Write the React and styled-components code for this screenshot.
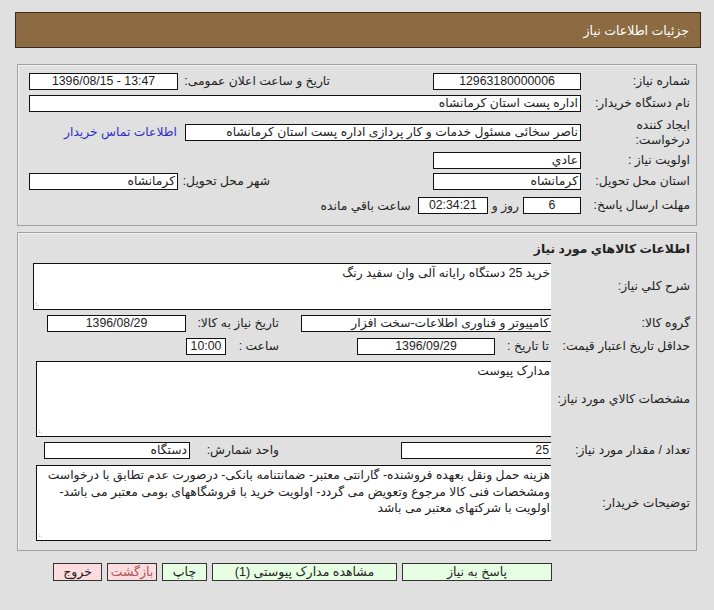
import React from "react";
import styled, { createGlobalStyle } from "styled-components";

const FS = "12.3px";

const GlobalStyle = createGlobalStyle`
  html, body { margin: 0; padding: 0; background: #e0e0e0; }
  body {
    font-family: "Liberation Sans", "DejaVu Sans", sans-serif;
    font-size: ${FS};
    color: #222;
  }
  * { box-sizing: border-box; }
`;

const Page = styled.div`
  width: 714px;
  height: 610px;
  direction: rtl;
  padding-top: 12px;
  background: #e0e0e0;
  overflow: hidden;
`;

const Header = styled.div`
  margin: 0 13px 0 15px;
  height: 36px;
  border: 1px solid #3a2a16;
  background: #8c6b43;
  color: #fff;
  display: flex;
  align-items: center;
  padding-right: 11px;
  font-size: 12.5px;
`;

const Panel = styled.div`
  margin: ${(p) => p.$mt}px 17px 0 17px;
  width: 680px;
  border: 1px solid #a0a0a0;
  box-shadow: inset 1px 1px 0 #f2f2f2;
  padding-bottom: ${(p) => p.$pb}px;
`;

const Row = styled.div`
  display: flex;
  align-items: center;
  height: ${(p) => p.$h}px;
  margin-top: ${(p) => p.$mt}px;
`;

const Cell = styled.div`
  width: ${(p) => p.$w}px;
  flex-shrink: 0;
  padding-right: ${(p) => p.$pr ?? 6}px;
  white-space: nowrap;
  line-height: 15px;
`;

const Title = styled.div`
  padding-right: 6px;
  font-weight: bold;
  white-space: nowrap;
`;

const Field = styled.div`
  width: ${(p) => p.$w}px;
  flex-shrink: 0;
  height: 17px;
  border: 1px solid #111;
  ${(p) => (p.$clip ? "border-right: none;" : "")}
  background: #fff;
  text-align: ${(p) => p.$align || "right"};
  padding: 0 2px;
  line-height: 15px;
  white-space: nowrap;
  overflow: hidden;
`;

const Inline = styled.span`
  margin: 0 ${(p) => p.$m ?? 4}px;
  white-space: nowrap;
`;

const Link = styled.a`
  color: #2f2fc4;
  text-decoration: none;
  white-space: nowrap;
`;

const Area = styled.div`
  position: relative;
  width: ${(p) => p.$w}px;
  height: ${(p) => p.$h}px;
  flex-shrink: 0;
  border: 1px solid #111;
  border-right: none;
  background: #fff;
  padding: ${(p) => p.$pt ?? 2}px 1px 0 0;
  line-height: ${(p) => p.$lh ?? 15}px;
  text-align: right;
  overflow: hidden;
`;

const Line = styled.div`
  white-space: nowrap;
`;

const Grip = styled.svg`
  position: absolute;
  left: 2px;
  bottom: 2px;
`;

const ButtonBar = styled.div`
  display: flex;
  gap: 5px;
  margin-top: 12px;
  padding-right: 162px;
`;

const Button = styled.button`
  width: ${(p) => p.$w}px;
  height: 18px;
  padding: 0;
  border: 1px solid #333;
  background: ${(p) => (p.$tone === "red" ? "#fcdcdf" : "#e6ffe2")};
  color: ${(p) => p.$color || "#222"};
  font-family: "Liberation Sans", "DejaVu Sans", sans-serif;
  font-size: 12.5px;
  line-height: 16px;
  direction: rtl;
`;

const GripIcon = () => (
  <Grip width="6" height="6" viewBox="0 0 6 6">
    <rect x="0" y="4" width="1" height="1" fill="#bbb" />
    <rect x="2" y="4" width="1" height="1" fill="#bbb" />
    <rect x="0" y="2" width="1" height="1" fill="#bbb" />
  </Grip>
);

export default function App() {
  return (
    <>
      <GlobalStyle />
      <Page>
        <Header>جزئیات اطلاعات نیاز</Header>

        <Panel $mt={16} $pb={11}>
          <Row $h={17} $mt={8}>
            <Cell $w={115}>شماره نیاز:</Cell>
            <Field $w={148} $align="center">12963180000006</Field>
            <Cell $w={255} $pr={103}>تاریخ و ساعت اعلان عمومی:</Cell>
            <Field $w={149} $align="center" dir="ltr">1396/08/15 - 13:47</Field>
          </Row>
          <Row $h={17} $mt={5}>
            <Cell $w={115}>نام دستگاه خریدار:</Cell>
            <Field $w={552}>اداره پست استان کرمانشاه</Field>
          </Row>
          <Row $h={35} $mt={3}>
            <Cell $w={115}>
              ایجاد کننده
              <br />
              درخواست:
            </Cell>
            <Field $w={396}>ناصر سخائی مسئول خدمات و کار پردازی اداره پست استان کرمانشاه</Field>
            <Cell $w={156} $pr={8}>
              <Link href="#">اطلاعات تماس خریدار</Link>
            </Cell>
          </Row>
          <Row $h={17} $mt={2}>
            <Cell $w={115}>اولویت نیاز :</Cell>
            <Field $w={148}>عادي</Field>
          </Row>
          <Row $h={17} $mt={4}>
            <Cell $w={115}>استان محل تحویل:</Cell>
            <Field $w={148}>کرمانشاه</Field>
            <Cell $w={255} $pr={163}>شهر محل تحویل:</Cell>
            <Field $w={149}>کرمانشاه</Field>
          </Row>
          <Row $h={17} $mt={7}>
            <Cell $w={115}>مهلت ارسال پاسخ:</Cell>
            <Field $w={58} $align="center">6</Field>
            <Inline $m={4}>روز و</Inline>
            <Field $w={70} $align="center">02:34:21</Field>
            <Inline $m={7}>ساعت باقي مانده</Inline>
          </Row>
        </Panel>

        <Panel $mt={6} $pb={9}>
          <Row $h={16} $mt={8}>
            <Title>اطلاعات کالاهاي مورد نياز</Title>
          </Row>
          <Row $h={47} $mt={6}>
            <Cell $w={145}>شرح کلي نياز:</Cell>
            <Area $w={518} $h={47}>
              خرید 25 دستگاه رایانه آلی وان سفید رنگ
              <GripIcon />
            </Area>
          </Row>
          <Row $h={17} $mt={5}>
            <Cell $w={145}>گروه کالا:</Cell>
            <Field $w={250} $clip>کامپیوتر و فناوری اطلاعات-سخت افزار</Field>
            <Cell $w={115} $pr={22}>تاریخ نیاز به کالا:</Cell>
            <Field $w={139} $align="center">1396/08/29</Field>
          </Row>
          <Row $h={17} $mt={6}>
            <Cell $w={141}>حداقل تاریخ اعتبار قیمت:</Cell>
            <Cell $w={60} $pr={6}>تا تاریخ :</Cell>
            <Field $w={138} $align="center">1396/09/29</Field>
            <Cell $w={131} $pr={78}>ساعت :</Cell>
            <Field $w={40} $align="center">10:00</Field>
          </Row>
          <Row $h={76} $mt={6}>
            <Cell $w={145}>مشخصات کالاي مورد نياز:</Cell>
            <Area $w={515} $h={76}>
              مدارک پیوست
              <GripIcon />
            </Area>
          </Row>
          <Row $h={17} $mt={5}>
            <Cell $w={145}>تعداد / مقدار مورد نیاز:</Cell>
            <Field $w={150} $clip>25</Field>
            <Cell $w={211} $pr={122}>واحد شمارش:</Cell>
            <Field $w={146}>دستگاه</Field>
          </Row>
          <Row $h={76} $mt={6}>
            <Cell $w={145}>توضیحات خریدار:</Cell>
            <Area $w={515} $h={76} $pt={1} $lh={16.5}>
              <Line>هزینه حمل ونقل بعهده فروشنده- گارانتی معتبر- ضمانتنامه بانکی- درصورت عدم تطابق با درخواست</Line>
              <Line>ومشخصات فنی کالا مرجوع وتعویض می گردد- اولویت خرید با فروشگاههای بومی معتبر می باشد-</Line>
              <Line>اولویت با شرکتهای معتبر می باشد</Line>
              <GripIcon />
            </Area>
          </Row>
        </Panel>

        <ButtonBar>
          <Button $w={150}>پاسخ به نیاز</Button>
          <Button $w={185}>مشاهده مدارک پیوستی (1)</Button>
          <Button $w={45}>چاپ</Button>
          <Button $w={50} $tone="red" $color="#a85858">بازگشت</Button>
          <Button $w={49} $tone="red">خروج</Button>
        </ButtonBar>
      </Page>
    </>
  );
}
